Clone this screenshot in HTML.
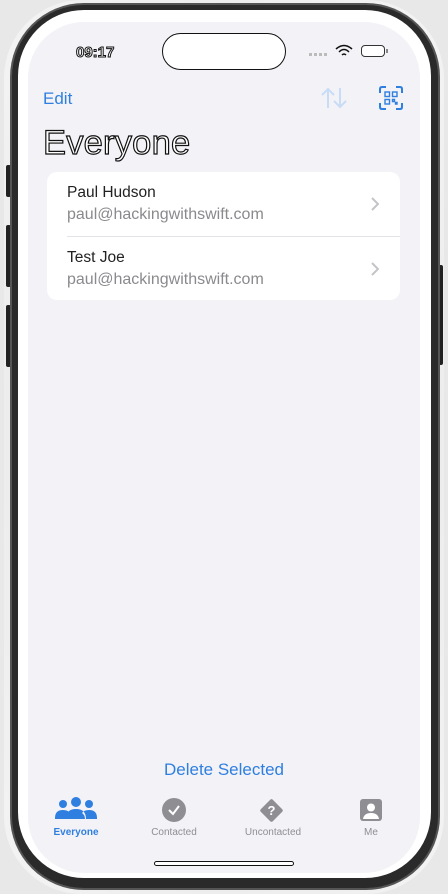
<!DOCTYPE html>
<html><head><meta charset="utf-8"><style>
*{margin:0;padding:0;box-sizing:border-box}
body{width:448px;height:894px;overflow:hidden;background:#e8e8e8;font-family:"Liberation Sans",sans-serif;position:relative}
.outer{position:absolute;left:4px;top:0;width:440px;height:894px;border-radius:78px;background:radial-gradient(#ddd,#f4f4f4)}
.bezel{position:absolute;left:12px;top:5px;width:426px;height:883px;border-radius:72px;background:#2a2a2a;box-shadow:0 0 0 2px #555}
.ring{position:absolute;left:18px;top:10px;width:413px;height:868px;border-radius:66px;background:#fff}
.screen{position:absolute;left:28px;top:22px;width:392px;height:851px;border-radius:56px;background:#f2f2f7;overflow:hidden}
.btn{position:absolute;background:#222;width:5px;border-radius:2px}
.abs{position:absolute}
.blue{color:#2f7fe0}
</style></head><body>
<div class="outer"></div>
<div class="btn" style="left:6px;top:165px;height:32px"></div>
<div class="btn" style="left:6px;top:225px;height:62px"></div>
<div class="btn" style="left:6px;top:305px;height:62px"></div>
<div class="btn" style="left:438px;top:265px;height:100px"></div>
<div class="bezel"></div>
<div class="ring"></div>
<div class="screen">
  <div class="abs" style="left:48px;top:22px;font-size:15px;color:#fff;-webkit-text-stroke:1px #111;font-weight:bold">09:17</div>
  <div class="abs" style="left:134px;top:11px;width:124px;height:37px;border-radius:19px;background:#fff;border:1px solid #111"></div>
  <div class="abs" style="left:281px;top:31px;width:20px;height:3px;background:repeating-linear-gradient(90deg,#bbb 0 3px,transparent 3px 5px)"></div>
  <svg class="abs" style="left:307px;top:22px" width="18" height="13" viewBox="0 0 18 13"><path d="M1 5Q9-2 17 5M4 8Q9 3 14 8M7 11Q9 9 11 11" stroke="#111" stroke-width="1.5" fill="none"/></svg>
  <div class="abs" style="left:333px;top:23px;width:24px;height:12px;border:1.3px solid #333;border-radius:4px;background:#fff"></div>
  <div class="abs" style="left:358px;top:27px;width:2px;height:4px;background:#888"></div>
  <div class="abs blue" style="left:15px;top:67px;font-size:17px">Edit</div>
  <svg class="abs" style="left:292px;top:64px" width="28" height="24" viewBox="0 0 28 24"><path d="M8 22V3M2 9l6-6 6 6M20 2v19M14 15l6 6 6-6" stroke="#c9dcf6" stroke-width="2" fill="none"/></svg>
  <svg class="abs" style="left:351px;top:64px" width="24" height="24" viewBox="0 0 24 24" fill="none" stroke="#2f7fe0" stroke-width="2"><path d="M1 7V3q0-2 2-2h4M17 1h4q2 0 2 2v4M23 17v4q0 2-2 2h-4M7 23H3q-2 0-2-2v-4"/><g stroke-width="1.4"><rect x="6" y="6" width="4.5" height="4.5"/><rect x="13.5" y="6" width="4.5" height="4.5"/><rect x="6" y="13.5" width="4.5" height="4.5"/><path d="M13.5 13.5h2v2h-2zM16.5 16.5h1.5v1.5h-1.5z"/></g></svg>
  <div class="abs" style="left:15px;top:102px;font-size:34.5px;color:#fff;-webkit-text-stroke:1.2px #111;letter-spacing:0.2px">Everyone</div>
  <div class="abs" style="left:19px;top:150px;width:353px;height:128px;border-radius:10px;background:#fff">
    <div class="abs" style="left:20px;top:12px;font-size:15.5px;color:#222">Paul Hudson</div>
    <div class="abs" style="left:20px;top:34px;font-size:16px;color:#8a8a8e">paul@hackingwithswift.com</div>
    <div class="abs" style="left:20px;top:64px;right:0;height:1px;background:#e4e4e8"></div>
    <div class="abs" style="left:20px;top:77px;font-size:15.5px;color:#222">Test Joe</div>
    <div class="abs" style="left:20px;top:99px;font-size:16px;color:#8a8a8e">paul@hackingwithswift.com</div>
    <svg class="abs" style="left:324px;top:25px" width="8" height="14" viewBox="0 0 8 14"><path d="M1 1l6 6-6 6" stroke="#c4c4c7" stroke-width="2" fill="none"/></svg>
    <svg class="abs" style="left:324px;top:90px" width="8" height="14" viewBox="0 0 8 14"><path d="M1 1l6 6-6 6" stroke="#c4c4c7" stroke-width="2" fill="none"/></svg>
  </div>
  <div class="abs blue" style="left:0;width:392px;text-align:center;top:738px;font-size:17px">Delete Selected</div>
  <svg class="abs" style="left:26px;top:775px" width="44" height="24" viewBox="0 0 44 24" fill="#2f7fe0"><circle cx="9" cy="7" r="4"/><circle cx="22" cy="5" r="5"/><circle cx="35" cy="7" r="4"/><path d="M1 21q0-8 8-8 5 0 7 3-3 2-3 6H1zM12 22q0-10 10-10t10 10zM43 21q0-8-8-8-5 0-7 3 3 2 3 6h12z"/></svg>
  <div class="abs" style="left:10px;width:76px;text-align:center;top:805px;font-size:10px;color:#2f7fe0;font-weight:bold">Everyone</div>
  <svg class="abs" style="left:134px;top:776px" width="24" height="24" viewBox="0 0 24 24"><circle cx="12" cy="12" r="12" fill="#8e8e93"/><path d="M7 12l4 4 6-8" stroke="#fff" stroke-width="2" fill="none"/></svg>
  <div class="abs" style="left:106px;width:80px;text-align:center;top:805px;font-size:10px;color:#8e8e93">Contacted</div>
  <svg class="abs" style="left:230px;top:775px" width="27" height="27" viewBox="0 0 27 27"><rect x="5" y="5" width="17" height="17" rx="2" transform="rotate(45 13.5 13.5)" fill="#8e8e93"/><text x="13.5" y="18" text-anchor="middle" font-size="13" font-weight="bold" fill="#fff" font-family="Liberation Sans">?</text></svg>
  <div class="abs" style="left:200px;width:90px;text-align:center;top:805px;font-size:10px;color:#8e8e93">Uncontacted</div>
  <svg class="abs" style="left:332px;top:777px" width="22" height="22" viewBox="0 0 22 22"><rect width="22" height="22" rx="3" fill="#8e8e93"/><circle cx="11" cy="8.5" r="4" fill="#fff"/><path d="M3 20q1-6 8-6t8 6z" fill="#fff"/></svg>
  <div class="abs" style="left:323px;width:40px;text-align:center;top:805px;font-size:10px;color:#8e8e93">Me</div>
  <div class="abs" style="left:126px;top:839px;width:140px;height:5px;border-radius:3px;background:#fff;border:1px solid #111"></div>
</div>
</body></html>
